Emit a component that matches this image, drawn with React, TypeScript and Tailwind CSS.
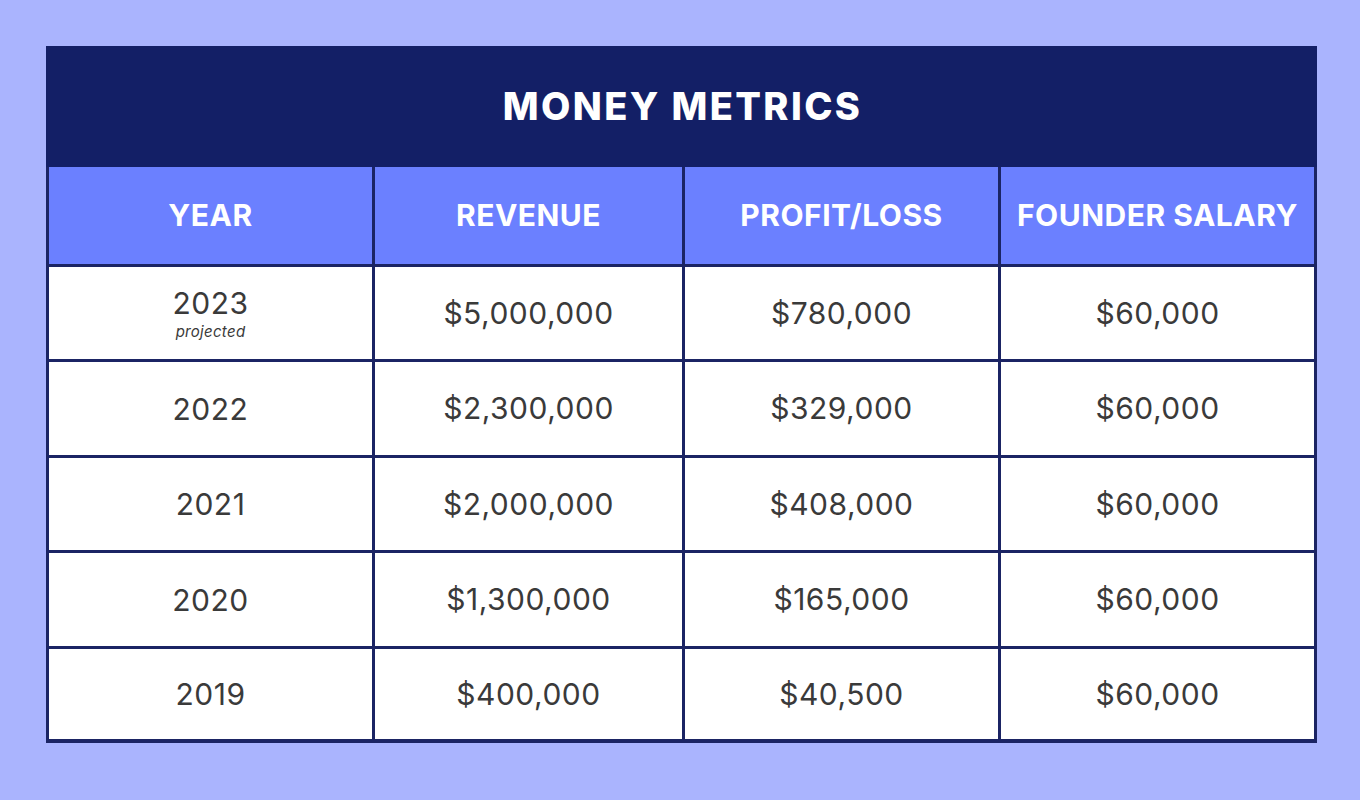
import React from 'react';

const rows = [
  { year: '2023', note: 'projected', revenue: '$5,000,000', profit: '$780,000', salary: '$60,000', h: 'h-[92px]' },
  { year: '2022', revenue: '$2,300,000', profit: '$329,000', salary: '$60,000', h: 'h-[93px]' },
  { year: '2021', revenue: '$2,000,000', profit: '$408,000', salary: '$60,000', h: 'h-[92px]' },
  { year: '2020', revenue: '$1,300,000', profit: '$165,000', salary: '$60,000', h: 'h-[93px]' },
  { year: '2019', revenue: '$400,000', profit: '$40,500', salary: '$60,000', h: 'h-[90px]' },
];

const headers = ['YEAR', 'REVENUE', 'PROFIT/LOSS', 'FOUNDER SALARY'];

const cell = 'bg-white flex items-center justify-center text-[30px] tracking-[0.5px] text-[#3a3a3a]';

const App: React.FC = () => {
  return (
    <div className="w-[1360px] h-[800px] bg-[#aab4fe] pt-[46px] pl-[46px] font-['Inter',sans-serif]">
      <div className="w-[1271px] bg-[#1b2464] px-[3px] pb-[4px]">
        <div className="h-[121px] bg-[#131f66] -mx-[3px] flex items-center justify-center">
          <h1 className="text-white text-[38px] font-extrabold tracking-[2.4px] pl-[2px]">MONEY METRICS</h1>
        </div>
        <div className="grid grid-cols-[323px_307px_313px_313px] gap-[3px]">
          {headers.map((h) => (
            <div key={h} className="h-[97px] bg-[#6b80ff] flex items-center justify-center">
              <span className="text-white text-[30px] font-bold tracking-[0.5px]">{h}</span>
            </div>
          ))}
          {rows.map((r) => (
            <React.Fragment key={r.year}>
              <div className={`${r.h} bg-white flex flex-col items-center justify-center text-[#3a3a3a]`}>
                <span className="text-[30px] tracking-[0.5px] leading-[34px]">{r.year}</span>
                {r.note && <span className="text-[15px] italic leading-[18px] tracking-[0.3px] mt-[3px]">{r.note}</span>}
              </div>
              <div className={`${r.h} ${cell}`}>{r.revenue}</div>
              <div className={`${r.h} ${cell}`}>{r.profit}</div>
              <div className={`${r.h} ${cell}`}>{r.salary}</div>
            </React.Fragment>
          ))}
        </div>
      </div>
    </div>
  );
};

export default App;
